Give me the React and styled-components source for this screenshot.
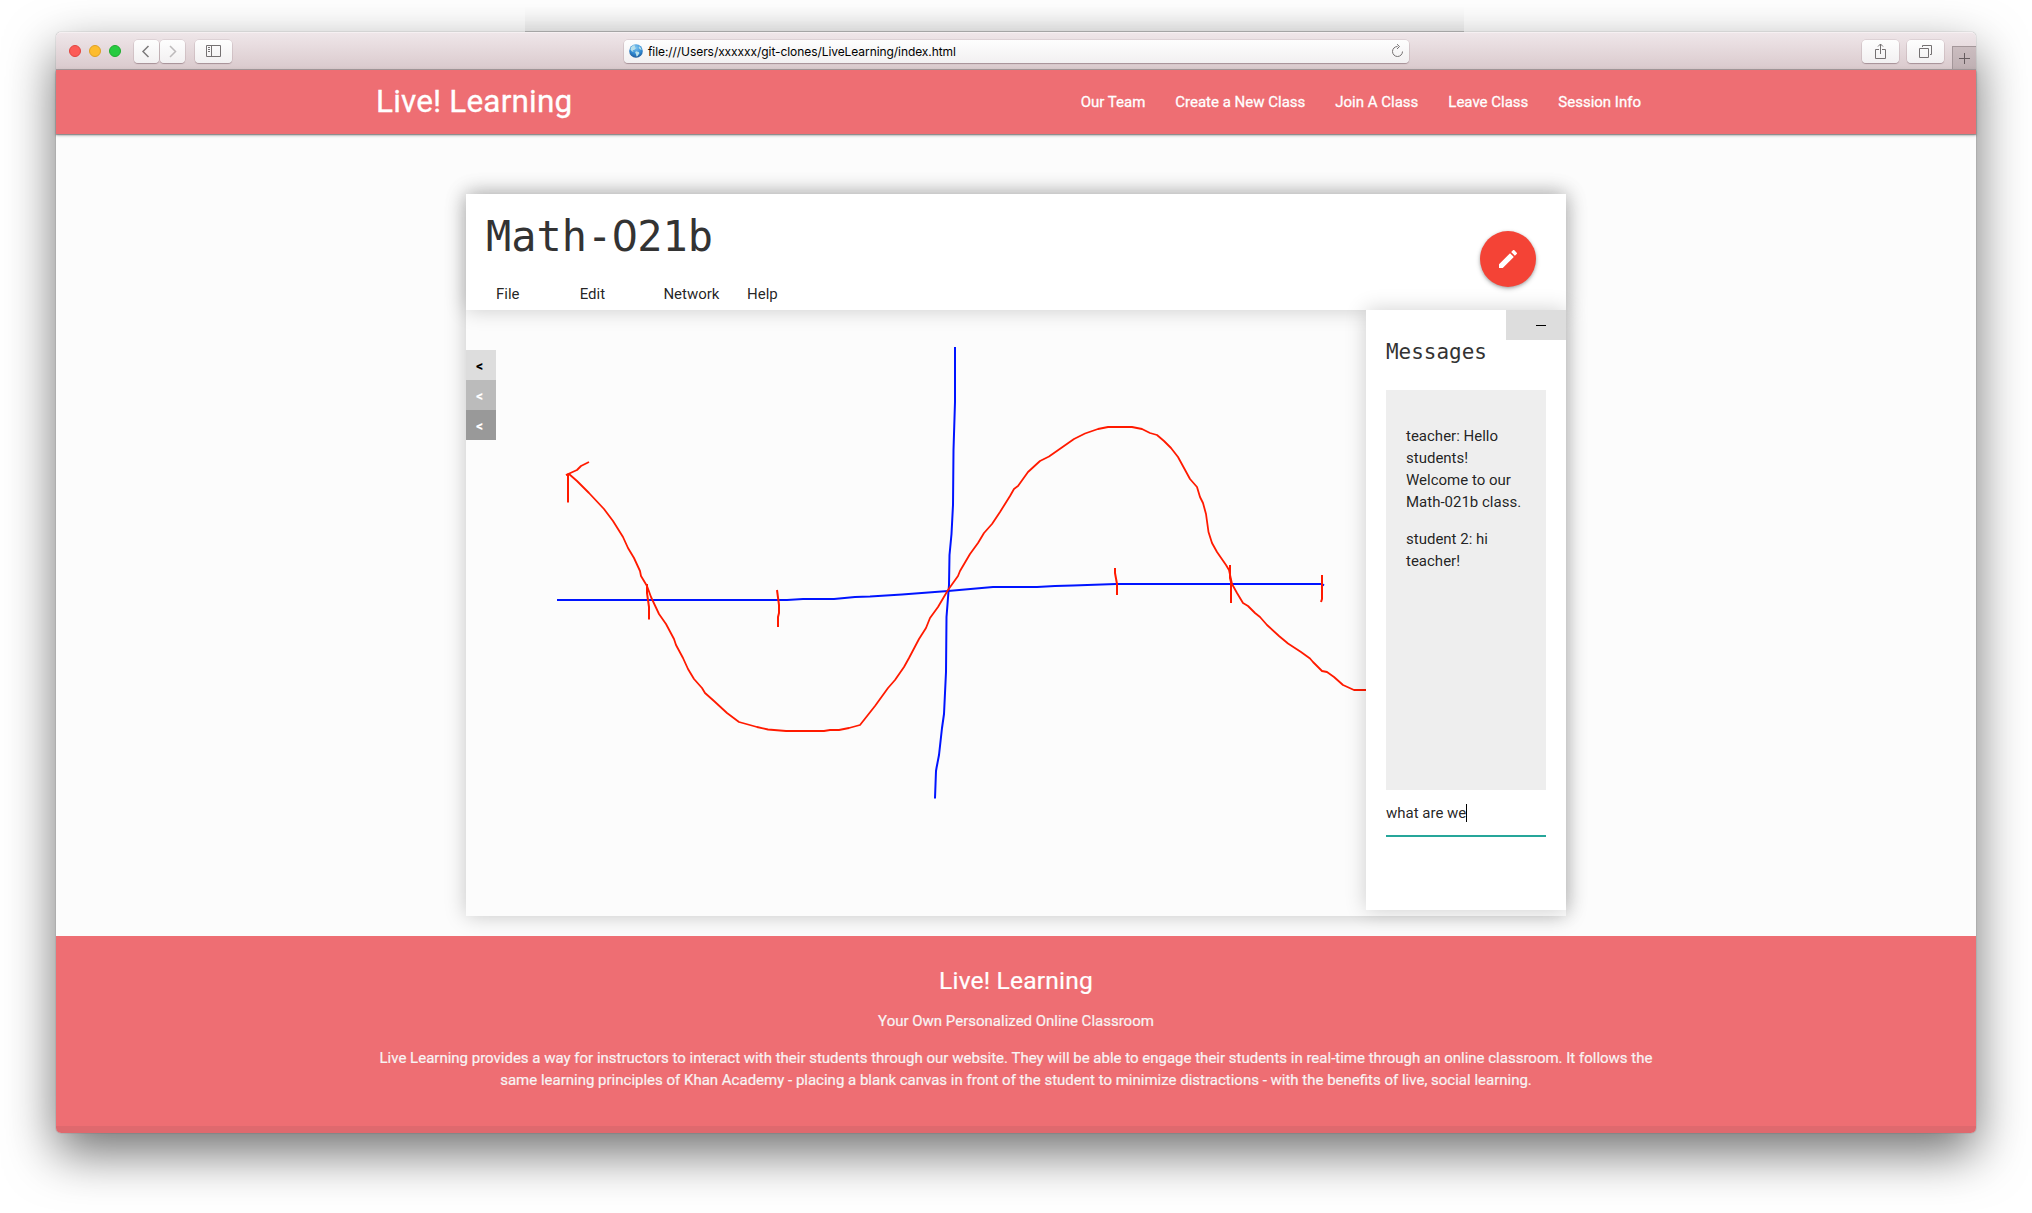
import React from "react";
import styled, { createGlobalStyle } from "styled-components";

const GlobalStyle = createGlobalStyle`
  html, body { margin: 0; padding: 0; background: #fff; }
  body {
    width: 2032px;
    height: 1213px;
    overflow: hidden;
    font-family: Roboto, "Liberation Sans", sans-serif;
    font-size: 15px;
    line-height: 22px;
    color: rgba(0, 0, 0, 0.87);
  }
  *, *::before, *::after { box-sizing: border-box; }
`;

const Desktop = styled.div`
  width: 2032px;
  height: 1213px;
  display: flex;
  flex-direction: column;
  align-items: center;
`;

const BackShade = styled.div`
  width: 939px;
  height: 32px;
  margin-right: 43px;
  flex: none;
  background: linear-gradient(to bottom, rgba(0, 0, 0, 0) 20%, rgba(0, 0, 0, 0.05) 100%);
  border-bottom: 1px solid rgba(0, 0, 0, 0.22);
`;

const Window = styled.div`
  width: 1920px;
  height: 1101px;
  flex: none;
  display: flex;
  flex-direction: column;
  background: #fcfcfc;
  border-radius: 5px;
  box-shadow: 0 0 1px rgba(0, 0, 0, 0.6), 0 20px 50px rgba(0, 0, 0, 0.56);
`;

const Toolbar = styled.div`
  height: 38px;
  flex: none;
  display: flex;
  align-items: center;
  padding-left: 13px;
  border-radius: 5px 5px 0 0;
  background: linear-gradient(#efe6e9, #dacacd);
  border-top: 1px solid #f6f0f2;
  border-bottom: 1px solid #a59a9c;
`;

const Lights = styled.div`
  display: flex;
  gap: 8px;
  margin-right: 13px;
`;

const Light = styled.span`
  width: 12px;
  height: 12px;
  border-radius: 50%;
  background: ${(p) => p.$fill};
  border: 1px solid ${(p) => p.$edge};
`;

const ToolButton = styled.span`
  width: ${(p) => p.$w}px;
  height: 23px;
  flex: none;
  margin-right: ${(p) => p.$gap || 0}px;
  display: flex;
  align-items: center;
  justify-content: center;
  border-radius: 4px;
  background: linear-gradient(#fefefe, #f2f0f1);
  box-shadow: 0 0 0 0.5px rgba(90, 60, 70, 0.18), 0 1px 1px rgba(90, 60, 70, 0.35);
  svg { display: block; }
`;

const AddressBar = styled(ToolButton)`
  margin-left: 392px;
  margin-right: 453px;
  justify-content: flex-start;
  padding: 0 5px;
  gap: 5px;
`;

const Address = styled.span`
  flex: 1;
  color: #000;
  font-family: Inter, "Liberation Sans", sans-serif;
  font-size: 12px;
  line-height: 16px;
  letter-spacing: -0.07px;
  padding-top: 1px;
  white-space: nowrap;
`;

const NewTab = styled.span`
  align-self: flex-end;
  width: 24px;
  height: 23px;
  display: flex;
  align-items: center;
  justify-content: center;
  background: linear-gradient(#cbbdc0, #bfb0b3);
  border-left: 1px solid #a4979a;
  border-top: 1px solid #a4979a;
`;

const Nav = styled.nav`
  position: relative;
  height: 64px;
  flex: none;
  display: flex;
  justify-content: center;
  background: #ee6e73;
  color: #fff;
  -webkit-text-stroke: 0.3px #fff;
  box-shadow: 0 2px 2px 0 rgba(0, 0, 0, 0.14), 0 1px 5px 0 rgba(0, 0, 0, 0.12), 0 1px 1px rgba(0, 0, 0, 0.3);
`;

const NavInner = styled.div`
  width: 1280px;
  display: flex;
  justify-content: space-between;
  align-items: center;
`;

const Brand = styled.a`
  font-size: 31.5px;
  line-height: 64px;
  letter-spacing: 0.17px;
`;

const NavLinks = styled.div`
  display: flex;
  a { padding: 0 15px; line-height: 64px; }
`;

const Main = styled.main`
  height: 802px;
  flex: none;
  display: flex;
  justify-content: center;
  align-items: flex-start;
  padding-top: 60px;
`;

const Classroom = styled.section`
  width: 1100px;
  height: 722px;
  display: flex;
  flex-direction: column;
  box-shadow: 0 0 20px rgba(0, 0, 0, 0.22);
`;

const ClassHeader = styled.header`
  height: 116px;
  flex: none;
  display: flex;
  justify-content: space-between;
  padding: 0 30px 0 20px;
  background: #fff;
  box-shadow: 0 0 20px rgba(0, 0, 0, 0.2);
`;

const ClassTitle = styled.h1`
  margin: 20px 0 0;
  height: 46px;
  font: 400 41.9px/46px "DejaVu Sans Mono", monospace;
  color: #333;
`;

const Zero = styled.span`
  margin: 0 -0.017em;
  font-family: "DejaVu Sans", sans-serif;
`;

const Menu = styled.div`
  display: flex;
  margin: 23px 0 0 10px;
  span { width: 83.7px; }
`;

const EditButton = styled.button`
  width: 56px;
  height: 56px;
  margin: 37px 0 0;
  padding: 0;
  border: 0;
  border-radius: 50%;
  display: flex;
  align-items: center;
  justify-content: center;
  background: #f44336;
  box-shadow: 0 2px 5px rgba(0, 0, 0, 0.22), 0 1px 3px rgba(0, 0, 0, 0.2);
`;

const Workspace = styled.div`
  position: relative;
  height: 606px;
  display: flex;
  align-items: flex-start;
`;

const Tools = styled.div`
  width: 30px;
  margin-top: 40px;
  display: flex;
  flex-direction: column;
`;

const Tool = styled.button`
  width: 30px;
  height: 30px;
  margin: 0;
  padding: 2px 0 0 10px;
  border: 0;
  text-align: left;
  font: 700 14px/28px Roboto, sans-serif;
  color: ${(p) => p.$color};
  background: ${(p) => p.$bg};
`;

const Board = styled.svg`
  width: 870px;
  height: 606px;
  display: block;
`;

const Messages = styled.aside`
  width: 200px;
  height: 600px;
  display: flex;
  flex-direction: column;
  background: #fff;
  box-shadow: 0 0 20px rgba(0, 0, 0, 0.19);
`;

const Minimize = styled.button`
  align-self: flex-end;
  width: 60px;
  height: 30px;
  margin: 0;
  padding: 1px 20px 0 0;
  border: 0;
  display: flex;
  align-items: center;
  justify-content: flex-end;
  background: #ddd;
`;

const Dash = styled.i`
  width: 10px;
  height: 1px;
  background: #000;
`;

const MessagesTitle = styled.h2`
  margin: 0 20px 38px;
  height: 12px;
  font: 400 20.95px/24px "DejaVu Sans Mono", monospace;
  color: #333;
`;

const Log = styled.div`
  height: 400px;
  margin: 0 20px;
  padding: 20px;
  background: #eee;
  p { margin: 15px 0; white-space: nowrap; }
`;

const Entry = styled.div`
  height: 47px;
  margin: 0 20px;
  display: flex;
  align-items: center;
  border-bottom: 2px solid #26a69a;
`;

const Caret = styled.i`
  width: 1px;
  height: 18px;
  background: #000;
`;

const Footer = styled.footer`
  height: 197px;
  flex: none;
  display: flex;
  flex-direction: column;
  align-items: center;
  justify-content: space-between;
  background: #ee6e73;
  border-radius: 0 0 5px 5px;
  overflow: hidden;
  color: #f8f4f4;
  text-align: center;
  -webkit-text-stroke: 0.2px currentColor;
`;

const FooterText = styled.div`
  padding-top: 31px;
  width: 1300px;
  h5 {
    margin: 0 0 16px;
    font-size: 24.6px;
    font-weight: 400;
    line-height: 27px;
    letter-spacing: 0.17px;
    color: #fff;
  }
  p { margin: 0 0 15px; line-height: 22px; }
`;

const FooterBase = styled.div`
  width: 100%;
  height: 7px;
  background: rgba(51, 51, 51, 0.08);
`;

const Globe = () => (
  <svg width="14" height="14" viewBox="0 0 14 14">
    <defs>
      <radialGradient id="sea" cx="0.5" cy="0.25" r="0.8">
        <stop offset="0" stopColor="#7cc4f2" />
        <stop offset="0.6" stopColor="#2f86cf" />
        <stop offset="1" stopColor="#1c4f8c" />
      </radialGradient>
    </defs>
    <circle cx="7" cy="7" r="6.8" fill="url(#sea)" />
    <path d="M2 3.2 4.3 1.2 6.4 1.5 5.7 3.2 7.1 4 5.2 6 3.6 6.2 4.6 8 2.8 7.2 1.4 5.5ZM7 7.2 9.8 8 10.4 9.2 8.6 12 7.5 12.6 7 10 6.1 8.4ZM10 2.3 12 4 12.6 6 10.9 5.3 9.8 4Z" fill="#b9e0ea" />
  </svg>
);

const red = { fill: "none", stroke: "#ff1a00", strokeWidth: 1.8, strokeLinejoin: "round" };
const blue = { fill: "none", stroke: "#0014ff", strokeWidth: 2, strokeLinejoin: "round" };

const Drawing = () => (
  <Board viewBox="496 310 870 606">
    <g {...blue}>
      <path d="M557 600H787L803 599L834 599L855 597L870 596.500L902 594.500L948 591L993 587H1037L1055 586L1073 585.500L1116 584H1322L1324 585.500" />
      <path d="M955 347V402L953.500 450L953 505L951.500 534L949.500 555L949 585L946.500 617L946 672L944 714L942 728L939 755L936.500 768L936 771L935 798V798.500" />
    </g>
    <g {...red}>
      <path d="M566 475L569 474L577 481L589 493L604 509L613 521L623 537L628 548L634 558L640 571L641 576L647 586L651 597L659 614L666 624L674 639L676 645L683 658L688 669L694 679L702 688L705 693L714 701L727 713L739 722L757 727L768 729.500L786 731H824L830 730L839 730L849 728L860 725L875 706L888 688L895 680L904 667L909 658L919 639L926 628L930 618L938 607L948 590L953 583L958 576L960 571L970 554L978 543L984 533L992 524L1000 512L1010 496L1014 489L1018 486L1028 472L1040 461L1049 456.500L1074 439L1085 433.500L1098 429L1108 427H1132L1142 429L1150 433L1157 435L1164 441L1171 448L1178 457L1184 468L1190 479L1197 487L1200 497L1203 503L1206 514L1208.500 532L1212 543L1217 552L1226 565L1229 570L1232 584L1237 593L1243 603L1248 606L1255 613L1260 617L1267 625L1279 636L1288 643.500L1301 652L1310 658.500L1313 662L1322 671L1327 672L1334 677L1343 685L1354 690H1366" />
      <path d="M566 475L577 470L581 466L589 462" />
      <g strokeWidth="2">
        <path d="M568 474V502.500" />
        <path d="M647 584V593L649 607V619.500" />
        <path d="M777 590L779 605V613L778 617V627" />
        <path d="M1115 568V573L1117 584V595" />
        <path d="M1230 565V578L1231 582V603" />
        <path d="M1322 575V599L1321 602" />
      </g>
    </g>
  </Board>
);

export default function App() {
  const line = { fill: "none", stroke: "#757172", strokeWidth: 1 };
  return (
    <>
      <GlobalStyle />
      <Desktop>
        <BackShade />
        <Window>
          <Toolbar>
            <Lights>
              <Light $fill="#fc5b57" $edge="#e2443f" />
              <Light $fill="#fdbc2e" $edge="#dfa023" />
              <Light $fill="#28cb41" $edge="#1fac2f" />
            </Lights>
            <ToolButton $w={25} $gap={1}>
              <svg width="11" height="13" viewBox="0 0 11 13"><path d="M7.500 1 2 6.500 7.500 12" fill="none" stroke="#7c797a" strokeWidth="1.5" /></svg>
            </ToolButton>
            <ToolButton $w={25} $gap={10}>
              <svg width="9" height="13" viewBox="0 0 9 13"><path d="M2 1 7.500 6.500 2 12" fill="none" stroke="#bdbabb" strokeWidth="1.5" /></svg>
            </ToolButton>
            <ToolButton $w={37}>
              <svg width="15" height="12" viewBox="0 0 15 12"><path d="M0.500 0.500H14.500V11.500H0.500ZM5.500 0.500V11.500M2 2.500H4M2 4.500H4M2 6.500H4" {...line} /></svg>
            </ToolButton>
            <AddressBar $w={785}>
              <Globe />
              <Address>file:///Users/xxxxxx/git-clones/LiveLearning/index.html</Address>
              <svg width="13" height="14" viewBox="0 0 13 14"><path d="M6.500 2.500A5 5 0 1 0 11.500 7.500M6 0.200 8.500 2.500 6 5" {...line} /></svg>
            </AddressBar>
            <ToolButton $w={37} $gap={8}>
              <svg width="12" height="17" viewBox="0 0 12 17"><path d="M4 6.500H0.500V15.500H10.500V6.500H7M5.500 11V1M3 3.500 5.500 1 8 3.500" {...line} /></svg>
            </ToolButton>
            <ToolButton $w={37} $gap={8}>
              <svg width="13" height="13" viewBox="0 0 13 13"><path d="M0.500 3.500H9.500V12.500H0.500ZM3.500 2V0.500H12.500V9.500H11" {...line} /></svg>
            </ToolButton>
            <NewTab>
              <svg width="11" height="11" viewBox="0 0 11 11"><path d="M5.500 0V11M0 5.500H11" fill="none" stroke="#665c5f" /></svg>
            </NewTab>
          </Toolbar>
          <Nav>
            <NavInner>
              <Brand>Live! Learning</Brand>
              <NavLinks>
                <a>Our Team</a>
                <a>Create a New Class</a>
                <a>Join A Class</a>
                <a>Leave Class</a>
                <a>Session Info</a>
              </NavLinks>
            </NavInner>
          </Nav>
          <Main>
            <Classroom>
              <ClassHeader>
                <div>
                  <ClassTitle>Math-<Zero>0</Zero>21b</ClassTitle>
                  <Menu>
                    <span>File</span>
                    <span>Edit</span>
                    <span>Network</span>
                    <span>Help</span>
                  </Menu>
                </div>
                <EditButton>
                  <svg width="24" height="24" viewBox="0 0 24 24" fill="#fff">
                    <path d="M3 17.250V21h3.750L17.810 9.940l-3.750-3.750L3 17.250zM20.710 7.040c.390-.390.390-1.020 0-1.410l-2.340-2.340c-.390-.390-1.020-.390-1.410 0l-1.830 1.830 3.750 3.750 1.830-1.830z" />
                  </svg>
                </EditButton>
              </ClassHeader>
              <Workspace>
                <Tools>
                  <Tool $bg="#ddd" $color="#000">&lt;</Tool>
                  <Tool $bg="#bbb" $color="#fff">&lt;</Tool>
                  <Tool $bg="#999" $color="#fff">&lt;</Tool>
                </Tools>
                <Drawing />
                <Messages>
                  <Minimize><Dash /></Minimize>
                  <MessagesTitle>Messages</MessagesTitle>
                  <Log>
                    <p>teacher: Hello<br />students!<br />Welcome to our<br />Math-021b class.</p>
                    <p>student 2: hi<br />teacher!</p>
                  </Log>
                  <Entry>what are we<Caret /></Entry>
                </Messages>
              </Workspace>
            </Classroom>
          </Main>
          <Footer>
            <FooterText>
              <h5>Live! Learning</h5>
              <p>Your Own Personalized Online Classroom</p>
              <p>
                Live Learning provides a way for instructors to interact with their students through our website. They will be able to engage their students in real-time through an online classroom. It follows the<br />
                same learning principles of Khan Academy - placing a blank canvas in front of the student to minimize distractions - with the benefits of live, social learning.
              </p>
            </FooterText>
            <FooterBase />
          </Footer>
        </Window>
      </Desktop>
    </>
  );
}
